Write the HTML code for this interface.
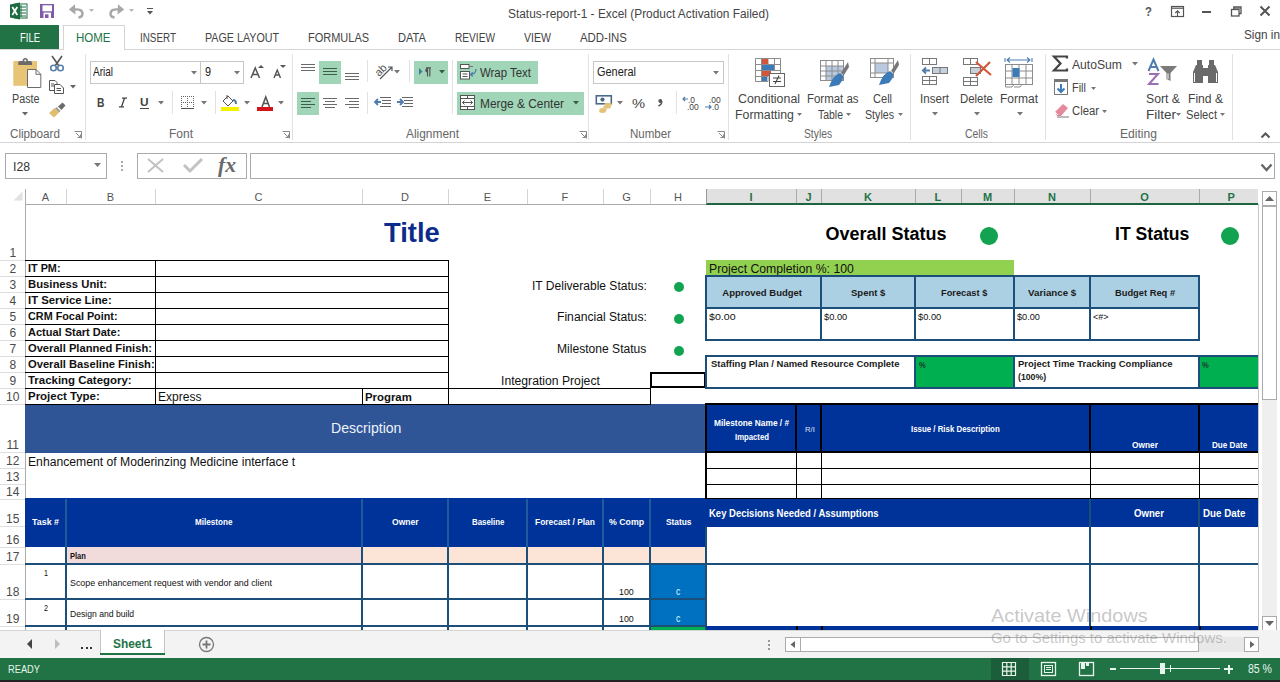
<!DOCTYPE html>
<html><head><meta charset="utf-8"><title>Status-report-1 - Excel</title>
<style>
html,body{margin:0;padding:0;}
body{width:1280px;height:682px;overflow:hidden;position:relative;background:#fff;font-family:"Liberation Sans", sans-serif;}
.t{position:absolute;white-space:nowrap;}
.r{position:absolute;}
.s{position:absolute;overflow:visible;}
</style></head><body>
<svg class="s" style="left:9px;top:2px;" width="19" height="18" viewBox="0 0 19 18"><rect x="6" y="2" width="12" height="14" fill="#fff" stroke="#1d6b40" stroke-width="1"/><path d="M9 5h8M9 8h8M9 11h8M9 14h8M12 3v12" stroke="#1d6b40" stroke-width="1"/><path d="M1 2.5 L11 0.5 L11 17.5 L1 15.5 Z" fill="#1d6b40"/><path d="M3.3 5 L8.3 13 M8.3 5 L3.3 13" stroke="#fff" stroke-width="1.8"/></svg>
<svg class="s" style="left:40px;top:4px;" width="14" height="14" viewBox="0 0 14 14"><rect x="0" y="0" width="14" height="14" fill="#7e5aa8"/><rect x="2.5" y="1.3" width="9.5" height="6" fill="#fff"/><rect x="3.5" y="8.6" width="7.5" height="5.4" fill="#fff"/><rect x="5" y="10.3" width="3.5" height="3.7" fill="#7e5aa8"/></svg>
<svg class="s" style="left:68px;top:3px;" width="17" height="15" viewBox="0 0 17 15"><path d="M0.8 6.5 L7 1.3 L7.5 11.5 Z" fill="#a8a8a8"/><path d="M6 6.5 Q14.5 5.5 14.5 11 Q14.5 14 10.5 14.5" fill="none" stroke="#a8a8a8" stroke-width="2.4"/></svg>
<svg class="s" style="left:88.0px;top:8.0px;" width="7" height="5.0" viewBox="0 0 7 5.0"><path d="M1 1 L6 1 L3.5 4.0 Z" fill="#b8b8b8"/></svg>
<svg class="s" style="left:108px;top:3px;" width="17" height="15" viewBox="0 0 17 15"><path d="M16.2 6.5 L10 1.3 L9.5 11.5 Z" fill="#a8a8a8"/><path d="M11 6.5 Q2.5 5.5 2.5 11 Q2.5 14 6.5 14.5" fill="none" stroke="#a8a8a8" stroke-width="2.4"/></svg>
<svg class="s" style="left:128.0px;top:8.0px;" width="7" height="5.0" viewBox="0 0 7 5.0"><path d="M1 1 L6 1 L3.5 4.0 Z" fill="#b8b8b8"/></svg>
<div class="r" style="left:147px;top:8px;width:6px;height:1.3px;background:#555"></div>
<svg class="s" style="left:146.0px;top:9.75px;" width="8" height="5.5" viewBox="0 0 8 5.5"><path d="M1 1 L7 1 L4.0 4.5 Z" fill="#555"/></svg>
<div class="t" style="left:508.00px;top:7.95px;font-size:12.5px;line-height:12.5px;color:#444;transform:scaleX(0.9513);transform-origin:0 0;">Status-report-1 - Excel (Product Activation Failed)</div>
<div class="t" style="left:1144.70px;top:5.20px;font-size:13px;line-height:13px;color:#555;font-weight:bold;transform:scaleX(0.8750);transform-origin:0 0;">?</div>
<svg class="s" style="left:1170px;top:5px;" width="15" height="13" viewBox="0 0 15 13"><rect x="1.5" y="1.5" width="12" height="10" fill="none" stroke="#555" stroke-width="1.2"/><path d="M1.5 3.2 H13.5" stroke="#555" stroke-width="1.2"/><path d="M7.5 11 V6 M5.3 8 L7.5 5.8 L9.7 8" fill="none" stroke="#555" stroke-width="1.1"/></svg>
<div class="r" style="left:1202px;top:11px;width:9px;height:2px;background:#555"></div>
<svg class="s" style="left:1230px;top:5px;" width="13" height="13" viewBox="0 0 13 13"><rect x="1.5" y="4.5" width="7.5" height="6.5" fill="none" stroke="#555" stroke-width="1.3"/><path d="M3.8 4.5 V1.8 H11 V8.5 H9" fill="none" stroke="#555" stroke-width="1.3"/><path d="M3.8 3 H11" stroke="#555" stroke-width="1.3"/></svg>
<svg class="s" style="left:1259px;top:5px;" width="12" height="12" viewBox="0 0 12 12"><path d="M1.5 1.5 L10.5 10.5 M10.5 1.5 L1.5 10.5" stroke="#555" stroke-width="2"/></svg>
<div class="r" style="left:0px;top:25px;width:59px;height:25px;background:#217346"></div>
<div class="t" style="left:19.50px;top:32.20px;font-size:12px;line-height:12px;color:#fff;transform:scaleX(0.7882);transform-origin:0 0;">FILE</div>
<div class="r" style="left:0px;top:49px;width:1280px;height:1px;background:#d4d4d4"></div>
<div class="r" style="left:63px;top:25px;width:62px;height:25px;background:#fff;border:1px solid #d4d4d4;border-bottom:none;box-sizing:border-box"></div>
<div class="t" style="left:76.00px;top:32.20px;font-size:12px;line-height:12px;color:#217346;transform:scaleX(0.9583);transform-origin:0 0;">HOME</div>
<div class="t" style="left:140.00px;top:32.20px;font-size:12px;line-height:12px;color:#444;transform:scaleX(0.8229);transform-origin:0 0;">INSERT</div>
<div class="t" style="left:205.00px;top:32.20px;font-size:12px;line-height:12px;color:#444;transform:scaleX(0.8929);transform-origin:0 0;">PAGE LAYOUT</div>
<div class="t" style="left:308.00px;top:32.20px;font-size:12px;line-height:12px;color:#444;transform:scaleX(0.9156);transform-origin:0 0;">FORMULAS</div>
<div class="t" style="left:398.00px;top:32.20px;font-size:12px;line-height:12px;color:#444;transform:scaleX(0.9256);transform-origin:0 0;">DATA</div>
<div class="t" style="left:455.00px;top:32.20px;font-size:12px;line-height:12px;color:#444;transform:scaleX(0.8443);transform-origin:0 0;">REVIEW</div>
<div class="t" style="left:524.00px;top:32.20px;font-size:12px;line-height:12px;color:#444;transform:scaleX(0.8780);transform-origin:0 0;">VIEW</div>
<div class="t" style="left:580.00px;top:32.20px;font-size:12px;line-height:12px;color:#444;transform:scaleX(0.9519);transform-origin:0 0;">ADD-INS</div>
<div class="t" style="left:1244.00px;top:29.20px;font-size:12px;line-height:12px;color:#444;transform:scaleX(0.9796);transform-origin:0 0;">Sign in</div>
<div class="r" style="left:0px;top:142px;width:1280px;height:1px;background:#d4d4d4"></div>
<div class="r" style="left:85px;top:54px;width:1px;height:86px;background:#e1e1e1"></div>
<div class="r" style="left:292px;top:54px;width:1px;height:86px;background:#e1e1e1"></div>
<div class="r" style="left:588px;top:54px;width:1px;height:86px;background:#e1e1e1"></div>
<div class="r" style="left:728px;top:54px;width:1px;height:86px;background:#e1e1e1"></div>
<div class="r" style="left:910px;top:54px;width:1px;height:86px;background:#e1e1e1"></div>
<div class="r" style="left:1045px;top:54px;width:1px;height:86px;background:#e1e1e1"></div>
<div class="r" style="left:1232px;top:54px;width:1px;height:86px;background:#e1e1e1"></div>
<div class="t" style="left:10.00px;top:128.20px;font-size:12px;line-height:12px;color:#666;transform:scaleX(0.9732);transform-origin:0 0;">Clipboard</div>
<div class="t" style="left:169.00px;top:128.20px;font-size:12px;line-height:12px;color:#666;">Font</div>
<div class="t" style="left:406.00px;top:128.20px;font-size:12px;line-height:12px;color:#666;transform:scaleX(0.9930);transform-origin:0 0;">Alignment</div>
<div class="t" style="left:630.00px;top:128.20px;font-size:12px;line-height:12px;color:#666;transform:scaleX(0.9619);transform-origin:0 0;">Number</div>
<div class="t" style="left:804.00px;top:128.20px;font-size:12px;line-height:12px;color:#666;transform:scaleX(0.8582);transform-origin:0 0;">Styles</div>
<div class="t" style="left:965.00px;top:128.20px;font-size:12px;line-height:12px;color:#666;transform:scaleX(0.8638);transform-origin:0 0;">Cells</div>
<div class="t" style="left:1120.00px;top:128.20px;font-size:12px;line-height:12px;color:#666;transform:scaleX(1.0068);transform-origin:0 0;">Editing</div>
<svg class="s" style="left:74px;top:131px;" width="8" height="8" viewBox="0 0 8 8"><path d="M0.5 0.5 H7.5 V7.5" fill="none" stroke="#888"/><path d="M2 2 L6.5 6.5 M3.5 6.5 H6.5 V3.5" fill="none" stroke="#888"/></svg>
<svg class="s" style="left:282px;top:131px;" width="8" height="8" viewBox="0 0 8 8"><path d="M0.5 0.5 H7.5 V7.5" fill="none" stroke="#888"/><path d="M2 2 L6.5 6.5 M3.5 6.5 H6.5 V3.5" fill="none" stroke="#888"/></svg>
<svg class="s" style="left:579px;top:131px;" width="8" height="8" viewBox="0 0 8 8"><path d="M0.5 0.5 H7.5 V7.5" fill="none" stroke="#888"/><path d="M2 2 L6.5 6.5 M3.5 6.5 H6.5 V3.5" fill="none" stroke="#888"/></svg>
<svg class="s" style="left:717px;top:131px;" width="8" height="8" viewBox="0 0 8 8"><path d="M0.5 0.5 H7.5 V7.5" fill="none" stroke="#888"/><path d="M2 2 L6.5 6.5 M3.5 6.5 H6.5 V3.5" fill="none" stroke="#888"/></svg>
<svg class="s" style="left:12px;top:56px;" width="31" height="33" viewBox="0 0 31 33"><rect x="1.3" y="5" width="23.7" height="24.8" fill="#e8c576"/><path d="M6.2 9 V6.5 Q6.2 5 8 5 H18.5 Q20 5 20 6.5 V9 Z" fill="#6b6b6b"/><circle cx="13.3" cy="4.5" r="2.6" fill="#6b6b6b"/><circle cx="13.3" cy="4.5" r="1" fill="#fff"/><path d="M15.5 13.5 H24 L28.8 18.3 V31.5 H15.5 Z" fill="#fff" stroke="#6b6b6b" stroke-width="1"/><path d="M24 13.5 V18.3 H28.8" fill="none" stroke="#6b6b6b" stroke-width="1"/></svg>
<div class="t" style="left:11.50px;top:93.20px;font-size:12px;line-height:12px;color:#444;transform:scaleX(0.8980);transform-origin:0 0;">Paste</div>
<svg class="s" style="left:20.5px;top:111.25px;" width="8" height="5.5" viewBox="0 0 8 5.5"><path d="M1 1 L7 1 L4.0 4.5 Z" fill="#666"/></svg>
<svg class="s" style="left:49px;top:55px;" width="16" height="17" viewBox="0 0 16 17"><path d="M3 1 L10 11 M13 1 L6 11" stroke="#555" stroke-width="1.6"/><circle cx="4.5" cy="13" r="2.8" fill="none" stroke="#5a7fa8" stroke-width="1.6"/><circle cx="11.5" cy="13" r="2.8" fill="none" stroke="#5a7fa8" stroke-width="1.6"/></svg>
<svg class="s" style="left:48px;top:79px;" width="18" height="16" viewBox="0 0 18 16"><path d="M1.5 1.5 H7 L9 3.5 V11.5 H1.5 Z" fill="#fff" stroke="#555"/><path d="M6.5 5.5 H12 L15.5 9 V14.5 H6.5 Z" fill="#fff" stroke="#555"/><path d="M3 5 H6 M3 7 H6 M8.5 9.5 H13 M8.5 11.5 H13" stroke="#555"/></svg>
<svg class="s" style="left:69.0px;top:84.25px;" width="8" height="5.5" viewBox="0 0 8 5.5"><path d="M1 1 L7 1 L4.0 4.5 Z" fill="#666"/></svg>
<svg class="s" style="left:48px;top:101px;" width="19" height="17" viewBox="0 0 19 17"><path d="M10 5.5 L14.5 1.5 L17.5 4.5 L13.5 9 Z" fill="#6b6b6b"/><path d="M8.5 6 L12.5 10 L11 11.5 L7 7.5 Z" fill="#9a9a9a"/><path d="M1 12 L6.5 7 L11 11.5 L6 16.5 Z" fill="#e0bd6e"/></svg>
<div class="r" style="left:90px;top:61px;width:154px;height:23px;border:1px solid #c6c6c6;box-sizing:border-box;background:#fff"></div>
<div class="r" style="left:200px;top:62px;width:1px;height:21px;background:#c6c6c6"></div>
<div class="t" style="left:93.00px;top:66.20px;font-size:12px;line-height:12px;color:#222;transform:scaleX(0.8333);transform-origin:0 0;">Arial</div>
<div class="t" style="left:205.00px;top:66.20px;font-size:12px;line-height:12px;color:#222;transform:scaleX(0.9057);transform-origin:0 0;">9</div>
<svg class="s" style="left:189.5px;top:69.75px;" width="8" height="5.5" viewBox="0 0 8 5.5"><path d="M1 1 L7 1 L4.0 4.5 Z" fill="#777"/></svg>
<svg class="s" style="left:232.5px;top:69.75px;" width="8" height="5.5" viewBox="0 0 8 5.5"><path d="M1 1 L7 1 L4.0 4.5 Z" fill="#777"/></svg>
<svg class="s" style="left:250px;top:67px;" width="11" height="12" viewBox="0 0 11 12"><path d="M1 11 L5.25 1 L9.5 11 M2.8 7.5 H7.7" fill="none" stroke="#555" stroke-width="1.5"/></svg>
<svg class="s" style="left:257.5px;top:64.5px;" width="6" height="4" viewBox="0 0 6 4"><path d="M0 3 L3 0 L6 3 Z" fill="#555"/></svg>
<svg class="s" style="left:273px;top:69px;" width="9" height="10" viewBox="0 0 9 10"><path d="M1 9 L4.25 1 L7.5 9 M2.3 6 H6.2" fill="none" stroke="#555" stroke-width="1.4"/></svg>
<svg class="s" style="left:279.5px;top:64.5px;" width="6" height="4" viewBox="0 0 6 4"><path d="M0 0 L3 3 L6 0 Z" fill="#555"/></svg>
<div class="t" style="left:96.60px;top:97.20px;font-size:12px;line-height:12px;color:#444;font-weight:bold;transform:scaleX(0.8580);transform-origin:0 0;">B</div>
<svg class="s" style="left:118px;top:97px;" width="10" height="11" viewBox="0 0 10 11"><path d="M4 1.2 H9 M1 9.8 H6 M6.5 1.2 L3.5 9.8" fill="none" stroke="#444" stroke-width="1.3"/></svg>
<div class="t" style="left:140.30px;top:96.70px;font-size:11px;line-height:11px;color:#444;font-weight:bold;transform:scaleX(1.0750);transform-origin:0 0;">U</div>
<div class="r" style="left:140px;top:108px;width:9px;height:1px;background:#444"></div>
<svg class="s" style="left:157.0px;top:100.25px;" width="8" height="5.5" viewBox="0 0 8 5.5"><path d="M1 1 L7 1 L4.0 4.5 Z" fill="#777"/></svg>
<div class="r" style="left:172px;top:91px;width:1px;height:23px;background:#e1e1e1"></div>
<svg class="s" style="left:181px;top:96px;" width="13" height="13" viewBox="0 0 13 13"><rect x="0" y="0" width="1" height="1" fill="#666"/><rect x="0" y="6" width="1" height="1" fill="#666"/><rect x="0" y="0" width="1" height="1" fill="#666"/><rect x="6" y="0" width="1" height="1" fill="#666"/><rect x="12" y="0" width="1" height="1" fill="#666"/><rect x="2" y="0" width="1" height="1" fill="#666"/><rect x="2" y="6" width="1" height="1" fill="#666"/><rect x="0" y="2" width="1" height="1" fill="#666"/><rect x="6" y="2" width="1" height="1" fill="#666"/><rect x="12" y="2" width="1" height="1" fill="#666"/><rect x="4" y="0" width="1" height="1" fill="#666"/><rect x="4" y="6" width="1" height="1" fill="#666"/><rect x="0" y="4" width="1" height="1" fill="#666"/><rect x="6" y="4" width="1" height="1" fill="#666"/><rect x="12" y="4" width="1" height="1" fill="#666"/><rect x="6" y="0" width="1" height="1" fill="#666"/><rect x="6" y="6" width="1" height="1" fill="#666"/><rect x="0" y="6" width="1" height="1" fill="#666"/><rect x="6" y="6" width="1" height="1" fill="#666"/><rect x="12" y="6" width="1" height="1" fill="#666"/><rect x="8" y="0" width="1" height="1" fill="#666"/><rect x="8" y="6" width="1" height="1" fill="#666"/><rect x="0" y="8" width="1" height="1" fill="#666"/><rect x="6" y="8" width="1" height="1" fill="#666"/><rect x="12" y="8" width="1" height="1" fill="#666"/><rect x="10" y="0" width="1" height="1" fill="#666"/><rect x="10" y="6" width="1" height="1" fill="#666"/><rect x="0" y="10" width="1" height="1" fill="#666"/><rect x="6" y="10" width="1" height="1" fill="#666"/><rect x="12" y="10" width="1" height="1" fill="#666"/><rect x="12" y="0" width="1" height="1" fill="#666"/><rect x="12" y="6" width="1" height="1" fill="#666"/><rect x="0" y="12" width="1" height="1" fill="#666"/><rect x="6" y="12" width="1" height="1" fill="#666"/><rect x="12" y="12" width="1" height="1" fill="#666"/><rect x="0" y="12" width="13" height="1" fill="#555"/></svg>
<svg class="s" style="left:200.0px;top:100.25px;" width="8" height="5.5" viewBox="0 0 8 5.5"><path d="M1 1 L7 1 L4.0 4.5 Z" fill="#777"/></svg>
<div class="r" style="left:215px;top:91px;width:1px;height:23px;background:#e1e1e1"></div>
<svg class="s" style="left:220px;top:94px;" width="21" height="18" viewBox="0 0 21 18"><path d="M3 7 L8 2 L13 7 L8 12 Z" fill="#fff" stroke="#555"/><path d="M7 1 V5" stroke="#555"/><path d="M13 6 Q16 6 16 10" fill="none" stroke="#4f7cae" stroke-width="2"/><rect x="1" y="13" width="18" height="4" fill="#f3f100"/></svg>
<svg class="s" style="left:243.0px;top:100.25px;" width="8" height="5.5" viewBox="0 0 8 5.5"><path d="M1 1 L7 1 L4.0 4.5 Z" fill="#777"/></svg>
<svg class="s" style="left:261px;top:96px;" width="10" height="12" viewBox="0 0 10 12"><path d="M1 11 L4.75 1 L8.5 11 M2.5 7.5 H7" fill="none" stroke="#555" stroke-width="1.6"/></svg>
<div class="r" style="left:257px;top:107px;width:16px;height:4px;background:#d3141b"></div>
<svg class="s" style="left:277.0px;top:100.25px;" width="8" height="5.5" viewBox="0 0 8 5.5"><path d="M1 1 L7 1 L4.0 4.5 Z" fill="#777"/></svg>
<div class="r" style="left:301px;top:64px;width:14px;height:1px;background:#6a6a6a"></div>
<div class="r" style="left:301px;top:67px;width:14px;height:1px;background:#6a6a6a"></div>
<div class="r" style="left:301px;top:70px;width:14px;height:1px;background:#6a6a6a"></div>
<div class="r" style="left:319px;top:61px;width:22px;height:23px;background:#a0d5b8"></div>
<div class="r" style="left:323px;top:68px;width:14px;height:1px;background:#3d5c4a"></div>
<div class="r" style="left:323px;top:71px;width:14px;height:1px;background:#3d5c4a"></div>
<div class="r" style="left:323px;top:74px;width:14px;height:1px;background:#3d5c4a"></div>
<div class="r" style="left:345px;top:73px;width:14px;height:1px;background:#6a6a6a"></div>
<div class="r" style="left:345px;top:76px;width:14px;height:1px;background:#6a6a6a"></div>
<div class="r" style="left:345px;top:79px;width:14px;height:1px;background:#6a6a6a"></div>
<div class="r" style="left:367px;top:60px;width:1px;height:22px;background:#e1e1e1"></div>
<svg class="s" style="left:374px;top:63px;" width="22" height="18" viewBox="0 0 22 18"><text x="0" y="0" font-family="Liberation Sans" font-size="11" fill="#555" transform="translate(5,14) rotate(-45)">ab</text><path d="M6 16 L18 4 M14 4 H18 V8" fill="none" stroke="#555" stroke-width="1.2"/></svg>
<svg class="s" style="left:393.0px;top:69.25px;" width="8" height="5.5" viewBox="0 0 8 5.5"><path d="M1 1 L7 1 L4.0 4.5 Z" fill="#777"/></svg>
<div class="r" style="left:409px;top:60px;width:1px;height:22px;background:#e1e1e1"></div>
<div class="r" style="left:414px;top:61px;width:34px;height:23px;background:#a0d5b8"></div>
<svg class="s" style="left:418px;top:67px;" width="14" height="10" viewBox="0 0 14 10"><path d="M1 1 L4.5 4.5 L1 8 Z" fill="#3d7a9e"/><path d="M8 0.8 H13 M9.5 0.8 V9.5 M11.8 0.8 V9.5" stroke="#555" stroke-width="1.2"/><path d="M9.5 1 A2.2 2.2 0 0 0 9.5 5.4 Z" fill="#555"/></svg>
<svg class="s" style="left:438.0px;top:69.25px;" width="8" height="5.5" viewBox="0 0 8 5.5"><path d="M1 1 L7 1 L4.0 4.5 Z" fill="#3a5a48"/></svg>
<div class="r" style="left:457px;top:61px;width:81px;height:23px;background:#a0d5b8"></div>
<svg class="s" style="left:460px;top:63px;" width="18" height="17" viewBox="0 0 18 17"><rect x="0.5" y="1.5" width="8.5" height="4" fill="#fff" stroke="#555"/><path d="M9 3.5 H13" stroke="#777"/><rect x="0.5" y="8.5" width="9" height="7.5" fill="#fff" stroke="#555"/><path d="M2.5 11 H7.5 M2.5 13.5 H7.5" stroke="#555"/><path d="M16 6 Q16 11 11 11.5 M12.8 9.3 L10.5 11.5 L12.8 13.5" fill="none" stroke="#4f7cae" stroke-width="1.3"/></svg>
<div class="t" style="left:480.00px;top:67.20px;font-size:12px;line-height:12px;color:#333;transform:scaleX(0.9510);transform-origin:0 0;">Wrap Text</div>
<div class="r" style="left:297px;top:92px;width:22px;height:23px;background:#a0d5b8"></div>
<div class="r" style="left:301px;top:98px;width:14px;height:1px;background:#3d5c4a"></div>
<div class="r" style="left:323px;top:98px;width:14px;height:1px;background:#6a6a6a"></div>
<div class="r" style="left:345px;top:98px;width:14px;height:1px;background:#6a6a6a"></div>
<div class="r" style="left:301px;top:101px;width:10px;height:1px;background:#3d5c4a"></div>
<div class="r" style="left:325px;top:101px;width:10px;height:1px;background:#6a6a6a"></div>
<div class="r" style="left:349px;top:101px;width:10px;height:1px;background:#6a6a6a"></div>
<div class="r" style="left:301px;top:104px;width:14px;height:1px;background:#3d5c4a"></div>
<div class="r" style="left:323px;top:104px;width:14px;height:1px;background:#6a6a6a"></div>
<div class="r" style="left:345px;top:104px;width:14px;height:1px;background:#6a6a6a"></div>
<div class="r" style="left:301px;top:107px;width:10px;height:1px;background:#3d5c4a"></div>
<div class="r" style="left:325px;top:107px;width:10px;height:1px;background:#6a6a6a"></div>
<div class="r" style="left:349px;top:107px;width:10px;height:1px;background:#6a6a6a"></div>
<div class="r" style="left:367px;top:92px;width:1px;height:22px;background:#e1e1e1"></div>
<svg class="s" style="left:374px;top:96px;" width="18" height="13" viewBox="0 0 18 13"><path d="M6 1.5 H17 M8 4.5 H17 M8 7.5 H17 M6 10.5 H17" stroke="#666" stroke-width="1.2"/><path d="M1 6 H7 M4 3 L1 6 L4 9" fill="none" stroke="#4f7cae" stroke-width="1.8"/></svg>
<svg class="s" style="left:396px;top:96px;" width="18" height="13" viewBox="0 0 18 13"><path d="M6 1.5 H17 M8 4.5 H17 M8 7.5 H17 M6 10.5 H17" stroke="#666" stroke-width="1.2"/><path d="M1 6 H7 M4 3 L7 6 L4 9" fill="none" stroke="#4f7cae" stroke-width="1.8"/></svg>
<div class="r" style="left:452px;top:60px;width:1px;height:54px;background:#e1e1e1"></div>
<div class="r" style="left:457px;top:92px;width:127px;height:23px;background:#a0d5b8"></div>
<svg class="s" style="left:460px;top:95px;" width="16" height="16" viewBox="0 0 16 16"><rect x="0.5" y="0.5" width="14" height="14" fill="#fff" stroke="#555"/><path d="M0.5 3.5 H14.5 M0.5 11.5 H14.5 M7.5 0.5 V3.5 M7.5 11.5 V14.5" fill="none" stroke="#555"/><path d="M2.5 7.5 H12.5 M4.5 5.5 L2.5 7.5 L4.5 9.5 M10.5 5.5 L12.5 7.5 L10.5 9.5" fill="none" stroke="#555"/></svg>
<div class="t" style="left:480.00px;top:98.20px;font-size:12px;line-height:12px;color:#333;transform:scaleX(0.9912);transform-origin:0 0;">Merge &amp; Center</div>
<svg class="s" style="left:572.0px;top:100.25px;" width="8" height="5.5" viewBox="0 0 8 5.5"><path d="M1 1 L7 1 L4.0 4.5 Z" fill="#3a5a48"/></svg>
<div class="r" style="left:593px;top:61px;width:131px;height:23px;border:1px solid #c6c6c6;box-sizing:border-box;background:#fff"></div>
<div class="t" style="left:597.00px;top:66.20px;font-size:12px;line-height:12px;color:#222;transform:scaleX(0.9123);transform-origin:0 0;">General</div>
<svg class="s" style="left:712.0px;top:69.75px;" width="8" height="5.5" viewBox="0 0 8 5.5"><path d="M1 1 L7 1 L4.0 4.5 Z" fill="#777"/></svg>
<svg class="s" style="left:595px;top:94px;" width="19" height="19" viewBox="0 0 19 19"><rect x="1.3" y="1.8" width="15" height="8" fill="#fff" stroke="#4a6a8a" stroke-width="1.6"/><circle cx="7.5" cy="5.6" r="2.1" fill="#4a6a8a"/><ellipse cx="13" cy="10.5" rx="4" ry="1.7" fill="#e3c27a"/><ellipse cx="12" cy="13" rx="4" ry="1.6" fill="#e3c27a"/><ellipse cx="8" cy="15.5" rx="3.8" ry="1.6" fill="#e3c27a"/><ellipse cx="7.5" cy="17.6" rx="3.5" ry="1.3" fill="#e3c27a"/></svg>
<svg class="s" style="left:616.0px;top:100.25px;" width="8" height="5.5" viewBox="0 0 8 5.5"><path d="M1 1 L7 1 L4.0 4.5 Z" fill="#777"/></svg>
<div class="t" style="left:632.00px;top:97.20px;font-size:13px;line-height:13px;color:#444;transform:scaleX(1.1304);transform-origin:0 0;">%</div>
<svg class="s" style="left:656px;top:98px;" width="8" height="9" viewBox="0 0 8 9"><circle cx="4.3" cy="3" r="1.9" fill="#555"/><path d="M5.9 3.3 Q5.9 6.6 2.4 8" fill="none" stroke="#555" stroke-width="1.4"/></svg>
<div class="r" style="left:676px;top:91px;width:1px;height:23px;background:#e1e1e1"></div>
<svg class="s" style="left:682px;top:95px;" width="17" height="16" viewBox="0 0 17 16"><text x="6" y="7.5" font-family="Liberation Sans" font-size="8.5" fill="#444">.0</text><text x="5" y="15" font-family="Liberation Sans" font-size="8.5" fill="#444">.00</text><path d="M1 4 H6 M3 2 L1 4 L3 6" fill="none" stroke="#4f7cae" stroke-width="1.2"/></svg>
<svg class="s" style="left:704px;top:95px;" width="17" height="16" viewBox="0 0 17 16"><text x="5" y="7.5" font-family="Liberation Sans" font-size="8.5" fill="#444">.00</text><text x="8" y="15" font-family="Liberation Sans" font-size="8.5" fill="#444">.0</text><path d="M1 12 H7 M5 10 L7 12 L5 14" fill="none" stroke="#4f7cae" stroke-width="1.2"/></svg>
<svg class="s" style="left:754px;top:57px;" width="32" height="31" viewBox="0 0 32 31"><path d="M1.5 1.5 H26.5 V24 M1.5 1.5 V24.5 H14 M1.5 7.5 H26.5 M1.5 13.5 H26.5 M1.5 19.5 H14 M7.5 1.5 V24.5 M14 1.5 V24.5 M20.5 1.5 V13.5" fill="none" stroke="#8c8c8c"/><rect x="8" y="2" width="6" height="5" fill="#d2573a"/><rect x="8" y="8" width="12" height="5" fill="#3d7ab8"/><rect x="8" y="14" width="9" height="5" fill="#d2573a"/><rect x="8" y="20" width="5" height="4" fill="#3d7ab8"/><rect x="15.5" y="16.5" width="15" height="13" fill="#fff" stroke="#666"/><path d="M19 21 H27 M19 24.5 H27 M25 18.5 L21 27" stroke="#444" stroke-width="1.1"/></svg>
<div class="t" style="left:738.00px;top:93.20px;font-size:12px;line-height:12px;color:#444;transform:scaleX(1.0333);transform-origin:0 0;">Conditional</div>
<div class="t" style="left:735.00px;top:109.20px;font-size:12px;line-height:12px;color:#444;transform:scaleX(1.0283);transform-origin:0 0;">Formatting</div>
<svg class="s" style="left:796.0px;top:111.5px;" width="7" height="5.0" viewBox="0 0 7 5.0"><path d="M1 1 L6 1 L3.5 4.0 Z" fill="#777"/></svg>
<svg class="s" style="left:819px;top:59px;" width="31" height="29" viewBox="0 0 31 29"><rect x="1.5" y="1.5" width="23" height="20" fill="#fff" stroke="#8c8c8c"/><rect x="7" y="7" width="17" height="14" fill="#b9c9e0"/><path d="M1.5 7 H24.5 M1.5 12 H24.5 M1.5 17 H24.5 M7 1.5 V21.5 M13 1.5 V21.5 M19 1.5 V21.5" stroke="#8c8c8c"/><path d="M29 3 L22 14 L25 16 L30 8 Z" fill="#777"/><path d="M21 14 Q14 16 10 28 L20 26 Q25 20 24 17 Z" fill="#3d7ab8"/></svg>
<div class="t" style="left:807.00px;top:93.20px;font-size:12px;line-height:12px;color:#444;transform:scaleX(0.9537);transform-origin:0 0;">Format as</div>
<div class="t" style="left:818.00px;top:109.20px;font-size:12px;line-height:12px;color:#444;transform:scaleX(0.8696);transform-origin:0 0;">Table</div>
<svg class="s" style="left:845.0px;top:111.5px;" width="7" height="5.0" viewBox="0 0 7 5.0"><path d="M1 1 L6 1 L3.5 4.0 Z" fill="#777"/></svg>
<svg class="s" style="left:869px;top:57px;" width="31" height="30" viewBox="0 0 31 30"><rect x="1.5" y="1.5" width="23" height="19" fill="#fff" stroke="#8c8c8c"/><rect x="6" y="6" width="13" height="10" fill="#b9c9e0"/><path d="M1.5 6 H24.5 M1.5 16 H24.5 M6 1.5 V20.5 M19 1.5 V20.5" stroke="#8c8c8c"/><path d="M29 3 L22 14 L25 16 L30 8 Z" fill="#777"/><path d="M21 14 Q14 16 10 28 L20 26 Q25 20 24 17 Z" fill="#3d7ab8"/></svg>
<div class="t" style="left:873.00px;top:93.20px;font-size:12px;line-height:12px;color:#444;transform:scaleX(0.9212);transform-origin:0 0;">Cell</div>
<div class="t" style="left:864.50px;top:109.20px;font-size:12px;line-height:12px;color:#444;transform:scaleX(0.8889);transform-origin:0 0;">Styles</div>
<svg class="s" style="left:896.5px;top:111.5px;" width="7" height="5.0" viewBox="0 0 7 5.0"><path d="M1 1 L6 1 L3.5 4.0 Z" fill="#777"/></svg>
<svg class="s" style="left:921px;top:57px;" width="28" height="29" viewBox="0 0 28 29"><rect x="1.5" y="1.5" width="14" height="6" fill="#fff" stroke="#777"/><path d="M8.5 1.5 V7.5" stroke="#777"/><rect x="11.5" y="10.5" width="15" height="6" fill="#c5d0dc" stroke="#777"/><path d="M19 10.5 V16.5" stroke="#777"/><path d="M2 13.5 H9 M5 10.5 L2 13.5 L5 16.5" fill="none" stroke="#4f7cae" stroke-width="2"/><rect x="1.5" y="19.5" width="14" height="8" fill="#fff" stroke="#777"/><path d="M8.5 19.5 V27.5 M1.5 23.5 H15.5" stroke="#777"/></svg>
<div class="t" style="left:920.00px;top:93.20px;font-size:12px;line-height:12px;color:#444;transform:scaleX(0.9667);transform-origin:0 0;">Insert</div>
<svg class="s" style="left:930.5px;top:111.25px;" width="8" height="5.5" viewBox="0 0 8 5.5"><path d="M1 1 L7 1 L4.0 4.5 Z" fill="#777"/></svg>
<svg class="s" style="left:962px;top:57px;" width="31" height="30" viewBox="0 0 31 30"><rect x="1.5" y="1.5" width="14" height="6" fill="#fff" stroke="#777"/><path d="M8.5 1.5 V7.5" stroke="#777"/><rect x="8.5" y="10.5" width="10" height="6" fill="#c5d0dc" stroke="#777"/><rect x="1.5" y="20.5" width="14" height="8" fill="#fff" stroke="#777"/><path d="M8.5 20.5 V28.5 M1.5 24.5 H15.5" stroke="#777"/><path d="M14 5 L29 18 M28 5 L14 19" stroke="#d2573a" stroke-width="2.2"/></svg>
<div class="t" style="left:960.00px;top:93.20px;font-size:12px;line-height:12px;color:#444;transform:scaleX(0.9496);transform-origin:0 0;">Delete</div>
<svg class="s" style="left:972.5px;top:111.25px;" width="8" height="5.5" viewBox="0 0 8 5.5"><path d="M1 1 L7 1 L4.0 4.5 Z" fill="#777"/></svg>
<svg class="s" style="left:1004px;top:56px;" width="30" height="32" viewBox="0 0 30 32"><path d="M1 2 V6 M28 2 V6 M3 4 H26 M6 1.5 L3 4 L6 6.5 M23 1.5 L26 4 L23 6.5" fill="none" stroke="#4f7cae" stroke-width="1.1"/><rect x="1.5" y="8.5" width="27" height="20" fill="#fff" stroke="#8c8c8c"/><path d="M1.5 15 H28.5 M1.5 22 H28.5 M8 8.5 V28.5 M15 8.5 V28.5 M22 8.5 V28.5" stroke="#8c8c8c"/><rect x="8.5" y="12" width="7" height="9" fill="#3d7ab8"/><path d="M1.5 28.5 V31 H8 L10 28.5 M10 31 H16 L18 28.5" fill="none" stroke="#8c8c8c"/></svg>
<div class="t" style="left:1000.00px;top:93.20px;font-size:12px;line-height:12px;color:#444;">Format</div>
<svg class="s" style="left:1015.5px;top:111.25px;" width="8" height="5.5" viewBox="0 0 8 5.5"><path d="M1 1 L7 1 L4.0 4.5 Z" fill="#777"/></svg>
<svg class="s" style="left:1052px;top:55px;" width="17" height="17" viewBox="0 0 17 17"><path d="M15 3.5 V1.5 H2 L8.5 8.5 L2 15.5 H15 V13.5" fill="none" stroke="#444" stroke-width="2.2" stroke-linejoin="miter"/></svg>
<div class="t" style="left:1072.00px;top:59.20px;font-size:12px;line-height:12px;color:#444;transform:scaleX(1.0127);transform-origin:0 0;">AutoSum</div>
<svg class="s" style="left:1130.5px;top:61.25px;" width="8" height="5.5" viewBox="0 0 8 5.5"><path d="M1 1 L7 1 L4.0 4.5 Z" fill="#777"/></svg>
<svg class="s" style="left:1053px;top:78px;" width="16" height="18" viewBox="0 0 16 18"><rect x="1.5" y="1.5" width="13" height="15" fill="#fff" stroke="#777"/><rect x="1" y="1" width="14" height="3" fill="#777"/><path d="M8 6 V14 M4.5 10.5 L8 14 L11.5 10.5" fill="none" stroke="#3d7ab8" stroke-width="2"/></svg>
<div class="t" style="left:1072.00px;top:82.20px;font-size:12px;line-height:12px;color:#444;transform:scaleX(0.9106);transform-origin:0 0;">Fill</div>
<svg class="s" style="left:1090.0px;top:85.5px;" width="7" height="5.0" viewBox="0 0 7 5.0"><path d="M1 1 L6 1 L3.5 4.0 Z" fill="#777"/></svg>
<svg class="s" style="left:1054px;top:103px;" width="16" height="15" viewBox="0 0 16 15"><path d="M1 9 L9 1 L14 5 L7 13 L3 13 Z" fill="#e58a9c"/><path d="M1 9 L4 12" stroke="#fff"/><path d="M3 14 H15" stroke="#777"/></svg>
<div class="t" style="left:1072.00px;top:105.20px;font-size:12px;line-height:12px;color:#444;transform:scaleX(0.9432);transform-origin:0 0;">Clear</div>
<svg class="s" style="left:1101.0px;top:108.5px;" width="7" height="5.0" viewBox="0 0 7 5.0"><path d="M1 1 L6 1 L3.5 4.0 Z" fill="#777"/></svg>
<svg class="s" style="left:1147px;top:58px;" width="13" height="28" viewBox="0 0 13 28"><path d="M1.5 13 L6.5 1.5 L11.5 13 M3.3 9 H9.7" fill="none" stroke="#4f7cae" stroke-width="2"/><path d="M2 16 H11 L2 26 H11.5" fill="none" stroke="#9c6fb0" stroke-width="2"/></svg>
<svg class="s" style="left:1159px;top:65px;" width="19" height="17" viewBox="0 0 19 17"><path d="M1 1 H18 L11.5 8 V16 L7.5 14 V8 Z" fill="#7a7a7a"/><path d="M9 8.5 V14" stroke="#fff" stroke-width="1"/></svg>
<div class="t" style="left:1146.00px;top:93.20px;font-size:12px;line-height:12px;color:#444;transform:scaleX(1.0187);transform-origin:0 0;">Sort &amp;</div>
<div class="t" style="left:1146.00px;top:109.20px;font-size:12px;line-height:12px;color:#444;transform:scaleX(1.1268);transform-origin:0 0;">Filter</div>
<svg class="s" style="left:1175.0px;top:111.5px;" width="7" height="5.0" viewBox="0 0 7 5.0"><path d="M1 1 L6 1 L3.5 4.0 Z" fill="#777"/></svg>
<svg class="s" style="left:1192px;top:59px;" width="28" height="25" viewBox="0 0 28 25"><rect x="5" y="1" width="5" height="6" fill="#6a6a6a"/><rect x="17" y="1" width="5" height="6" fill="#6a6a6a"/><path d="M4 6 H11 V24 H1 V13 Z" fill="#6a6a6a"/><path d="M16 6 H23 L26 13 V24 H16 Z" fill="#6a6a6a"/><rect x="10" y="9" width="7" height="8" fill="#6a6a6a"/><path d="M2.5 14 V23 M24.5 14 V23" stroke="#fff" stroke-width="1"/></svg>
<div class="t" style="left:1188.00px;top:93.20px;font-size:12px;line-height:12px;color:#444;transform:scaleX(1.0108);transform-origin:0 0;">Find &amp;</div>
<div class="t" style="left:1186.00px;top:109.20px;font-size:12px;line-height:12px;color:#444;transform:scaleX(0.9288);transform-origin:0 0;">Select</div>
<svg class="s" style="left:1219.0px;top:111.5px;" width="7" height="5.0" viewBox="0 0 7 5.0"><path d="M1 1 L6 1 L3.5 4.0 Z" fill="#777"/></svg>
<svg class="s" style="left:1260px;top:131px;" width="11" height="8" viewBox="0 0 11 8"><path d="M1.5 6.5 L5.5 2.5 L9.5 6.5" fill="none" stroke="#555" stroke-width="2"/></svg>
<div class="r" style="left:5px;top:153px;width:102px;height:26px;border:1px solid #ababab;box-sizing:border-box;background:#fff"></div>
<div class="t" style="left:13.00px;top:161.20px;font-size:12px;line-height:12px;color:#333;transform:scaleX(1.0226);transform-origin:0 0;">I28</div>
<svg class="s" style="left:93.0px;top:162.0px;" width="9" height="6.0" viewBox="0 0 9 6.0"><path d="M1 1 L8 1 L4.5 5.0 Z" fill="#777"/></svg>
<div class="r" style="left:121px;top:161px;width:2px;height:2px;background:#aaa"></div>
<div class="r" style="left:121px;top:165px;width:2px;height:2px;background:#aaa"></div>
<div class="r" style="left:121px;top:169px;width:2px;height:2px;background:#aaa"></div>
<div class="r" style="left:137px;top:153px;width:110px;height:26px;border:1px solid #ababab;box-sizing:border-box;background:#fff"></div>
<svg class="s" style="left:146px;top:157px;" width="19" height="17" viewBox="0 0 19 17"><path d="M2 2 L17 15 M17 2 L2 15" stroke="#c2c2c2" stroke-width="2"/></svg>
<svg class="s" style="left:182px;top:157px;" width="22" height="17" viewBox="0 0 22 17"><path d="M2 8 L8 14 L20 2" fill="none" stroke="#c2c2c2" stroke-width="3"/></svg>
<div class="t" style="left:218.00px;top:155.20px;font-size:20px;line-height:20px;color:#6a6a6a;font-weight:bold;font-style:italic;font-family:'Liberation Serif', serif;transform:scaleX(1.0827);transform-origin:0 0;">fx</div>
<div class="r" style="left:250px;top:153px;width:1025px;height:26px;border:1px solid #ababab;box-sizing:border-box;background:#fff"></div>
<svg class="s" style="left:1260px;top:163px;" width="13" height="10" viewBox="0 0 13 10"><path d="M1.5 1.5 L6.5 7 L11.5 1.5" fill="none" stroke="#666" stroke-width="2.4"/></svg>
<div class="r" style="left:0px;top:189px;width:1258px;height:441px;background:#fff"></div>
<div class="r" style="left:706px;top:189px;width:90px;height:14px;background:#e1e1e1"></div>
<div class="r" style="left:796px;top:189px;width:25px;height:14px;background:#e1e1e1"></div>
<div class="r" style="left:821px;top:189px;width:94px;height:14px;background:#e1e1e1"></div>
<div class="r" style="left:915px;top:189px;width:46px;height:14px;background:#e1e1e1"></div>
<div class="r" style="left:961px;top:189px;width:53px;height:14px;background:#e1e1e1"></div>
<div class="r" style="left:1014px;top:189px;width:76px;height:14px;background:#e1e1e1"></div>
<div class="r" style="left:1090px;top:189px;width:109px;height:14px;background:#e1e1e1"></div>
<div class="r" style="left:1199px;top:189px;width:59px;height:14px;background:#e1e1e1"></div>
<div class="r" style="left:66px;top:189px;width:1px;height:15px;background:#d4d4d4"></div>
<div class="t" style="left:41.81px;top:191.70px;font-size:11px;line-height:11px;color:#555;">A</div>
<div class="r" style="left:155px;top:189px;width:1px;height:15px;background:#d4d4d4"></div>
<div class="t" style="left:106.81px;top:191.70px;font-size:11px;line-height:11px;color:#555;">B</div>
<div class="r" style="left:362px;top:189px;width:1px;height:15px;background:#d4d4d4"></div>
<div class="t" style="left:254.50px;top:191.70px;font-size:11px;line-height:11px;color:#555;">C</div>
<div class="r" style="left:448px;top:189px;width:1px;height:15px;background:#d4d4d4"></div>
<div class="t" style="left:401.00px;top:191.70px;font-size:11px;line-height:11px;color:#555;">D</div>
<div class="r" style="left:527px;top:189px;width:1px;height:15px;background:#d4d4d4"></div>
<div class="t" style="left:483.81px;top:191.70px;font-size:11px;line-height:11px;color:#555;">E</div>
<div class="r" style="left:603px;top:189px;width:1px;height:15px;background:#d4d4d4"></div>
<div class="t" style="left:561.62px;top:191.70px;font-size:11px;line-height:11px;color:#555;">F</div>
<div class="r" style="left:650px;top:189px;width:1px;height:15px;background:#d4d4d4"></div>
<div class="t" style="left:622.25px;top:191.70px;font-size:11px;line-height:11px;color:#555;">G</div>
<div class="r" style="left:706px;top:189px;width:1px;height:15px;background:#d4d4d4"></div>
<div class="t" style="left:674.00px;top:191.70px;font-size:11px;line-height:11px;color:#555;">H</div>
<div class="r" style="left:796px;top:189px;width:1px;height:15px;background:#ababab"></div>
<div class="t" style="left:749.50px;top:191.70px;font-size:11px;line-height:11px;color:#217346;font-weight:bold;">I</div>
<div class="r" style="left:821px;top:189px;width:1px;height:15px;background:#ababab"></div>
<div class="t" style="left:805.44px;top:191.70px;font-size:11px;line-height:11px;color:#217346;font-weight:bold;">J</div>
<div class="r" style="left:915px;top:189px;width:1px;height:15px;background:#ababab"></div>
<div class="t" style="left:864.00px;top:191.70px;font-size:11px;line-height:11px;color:#217346;font-weight:bold;">K</div>
<div class="r" style="left:961px;top:189px;width:1px;height:15px;background:#ababab"></div>
<div class="t" style="left:934.62px;top:191.70px;font-size:11px;line-height:11px;color:#217346;font-weight:bold;">L</div>
<div class="r" style="left:1014px;top:189px;width:1px;height:15px;background:#ababab"></div>
<div class="t" style="left:982.94px;top:191.70px;font-size:11px;line-height:11px;color:#217346;font-weight:bold;">M</div>
<div class="r" style="left:1090px;top:189px;width:1px;height:15px;background:#ababab"></div>
<div class="t" style="left:1048.00px;top:191.70px;font-size:11px;line-height:11px;color:#217346;font-weight:bold;">N</div>
<div class="r" style="left:1199px;top:189px;width:1px;height:15px;background:#ababab"></div>
<div class="t" style="left:1140.25px;top:191.70px;font-size:11px;line-height:11px;color:#217346;font-weight:bold;">O</div>
<div class="t" style="left:1227.61px;top:191.70px;font-size:11px;line-height:11px;color:#217346;font-weight:bold;">P</div>
<div class="r" style="left:0px;top:204px;width:706px;height:1px;background:#ababab"></div>
<div class="r" style="left:706px;top:203px;width:552px;height:2px;background:#1e6440"></div>
<div class="r" style="left:706px;top:189px;width:1px;height:15px;background:#9a9a9a"></div>
<svg class="s" style="left:13px;top:191px;" width="10" height="10" viewBox="0 0 10 10"><path d="M9.5 0.5 L9.5 9.5 L0.5 9.5 Z" fill="#e2e2e2"/></svg>
<div class="r" style="left:25px;top:189px;width:1px;height:441px;background:#ababab"></div>
<div class="r" style="left:0px;top:204px;width:25px;height:426px;background:#fff"></div>
<div class="r" style="left:0px;top:260px;width:25px;height:1px;background:#dedede"></div>
<div class="t" style="left:9.49px;top:247.20px;font-size:12px;line-height:12px;color:#4a4a4a;">1</div>
<div class="r" style="left:0px;top:276px;width:25px;height:1px;background:#dedede"></div>
<div class="t" style="left:9.49px;top:263.20px;font-size:12px;line-height:12px;color:#4a4a4a;">2</div>
<div class="r" style="left:0px;top:292px;width:25px;height:1px;background:#dedede"></div>
<div class="t" style="left:9.49px;top:279.20px;font-size:12px;line-height:12px;color:#4a4a4a;">3</div>
<div class="r" style="left:0px;top:308px;width:25px;height:1px;background:#dedede"></div>
<div class="t" style="left:9.49px;top:295.20px;font-size:12px;line-height:12px;color:#4a4a4a;">4</div>
<div class="r" style="left:0px;top:324px;width:25px;height:1px;background:#dedede"></div>
<div class="t" style="left:9.49px;top:311.20px;font-size:12px;line-height:12px;color:#4a4a4a;">5</div>
<div class="r" style="left:0px;top:340px;width:25px;height:1px;background:#dedede"></div>
<div class="t" style="left:9.49px;top:327.20px;font-size:12px;line-height:12px;color:#4a4a4a;">6</div>
<div class="r" style="left:0px;top:356px;width:25px;height:1px;background:#dedede"></div>
<div class="t" style="left:9.49px;top:343.20px;font-size:12px;line-height:12px;color:#4a4a4a;">7</div>
<div class="r" style="left:0px;top:372px;width:25px;height:1px;background:#dedede"></div>
<div class="t" style="left:9.49px;top:359.20px;font-size:12px;line-height:12px;color:#4a4a4a;">8</div>
<div class="r" style="left:0px;top:388px;width:25px;height:1px;background:#dedede"></div>
<div class="t" style="left:9.49px;top:375.20px;font-size:12px;line-height:12px;color:#4a4a4a;">9</div>
<div class="r" style="left:0px;top:404px;width:25px;height:1px;background:#dedede"></div>
<div class="t" style="left:6.11px;top:391.20px;font-size:12px;line-height:12px;color:#4a4a4a;">10</div>
<div class="r" style="left:0px;top:452px;width:25px;height:1px;background:#dedede"></div>
<div class="t" style="left:6.55px;top:439.20px;font-size:12px;line-height:12px;color:#4a4a4a;">11</div>
<div class="r" style="left:0px;top:468px;width:25px;height:1px;background:#dedede"></div>
<div class="t" style="left:6.11px;top:455.20px;font-size:12px;line-height:12px;color:#4a4a4a;">12</div>
<div class="r" style="left:0px;top:484px;width:25px;height:1px;background:#dedede"></div>
<div class="t" style="left:6.11px;top:471.20px;font-size:12px;line-height:12px;color:#4a4a4a;">13</div>
<div class="r" style="left:0px;top:499px;width:25px;height:1px;background:#dedede"></div>
<div class="t" style="left:6.11px;top:486.20px;font-size:12px;line-height:12px;color:#4a4a4a;">14</div>
<div class="r" style="left:0px;top:526px;width:25px;height:1px;background:#dedede"></div>
<div class="t" style="left:6.11px;top:513.20px;font-size:12px;line-height:12px;color:#4a4a4a;">15</div>
<div class="r" style="left:0px;top:547px;width:25px;height:1px;background:#dedede"></div>
<div class="t" style="left:6.11px;top:534.20px;font-size:12px;line-height:12px;color:#4a4a4a;">16</div>
<div class="r" style="left:0px;top:564px;width:25px;height:1px;background:#dedede"></div>
<div class="t" style="left:6.11px;top:551.20px;font-size:12px;line-height:12px;color:#4a4a4a;">17</div>
<div class="r" style="left:0px;top:599px;width:25px;height:1px;background:#dedede"></div>
<div class="t" style="left:6.11px;top:586.20px;font-size:12px;line-height:12px;color:#4a4a4a;">18</div>
<div class="r" style="left:0px;top:626px;width:25px;height:1px;background:#dedede"></div>
<div class="t" style="left:6.11px;top:613.20px;font-size:12px;line-height:12px;color:#4a4a4a;">19</div>
<div class="t" style="left:6.11px;top:647.20px;font-size:12px;line-height:12px;color:#4a4a4a;">20</div>
<div class="t" style="left:383.70px;top:219.70px;font-size:27px;line-height:27px;color:#0b2c8a;font-weight:bold;transform:scaleX(1.0127);transform-origin:0 0;">Title</div>
<div class="t" style="left:825.50px;top:225.20px;font-size:18px;line-height:18px;color:#000;font-weight:bold;">Overall Status</div>
<div class="t" style="left:1114.60px;top:225.20px;font-size:18px;line-height:18px;color:#000;font-weight:bold;transform:scaleX(0.9789);transform-origin:0 0;">IT Status</div>
<div class="r" style="left:979.5px;top:227px;width:18px;height:18px;background:#11a34f;border-radius:50%"></div>
<div class="r" style="left:1221px;top:227px;width:18px;height:18px;background:#11a34f;border-radius:50%"></div>
<div class="r" style="left:25px;top:260px;width:424px;height:1px;background:#000"></div>
<div class="r" style="left:25px;top:276px;width:424px;height:1px;background:#000"></div>
<div class="r" style="left:25px;top:292px;width:424px;height:1px;background:#000"></div>
<div class="r" style="left:25px;top:308px;width:424px;height:1px;background:#000"></div>
<div class="r" style="left:25px;top:324px;width:424px;height:1px;background:#000"></div>
<div class="r" style="left:25px;top:340px;width:424px;height:1px;background:#000"></div>
<div class="r" style="left:25px;top:356px;width:424px;height:1px;background:#000"></div>
<div class="r" style="left:25px;top:372px;width:424px;height:1px;background:#000"></div>
<div class="r" style="left:25px;top:388px;width:424px;height:1px;background:#000"></div>
<div class="r" style="left:155px;top:260px;width:1px;height:144px;background:#000"></div>
<div class="r" style="left:448px;top:260px;width:1px;height:144px;background:#000"></div>
<div class="r" style="left:362px;top:388px;width:1px;height:16px;background:#000"></div>
<div class="r" style="left:448px;top:388px;width:203px;height:1px;background:#000"></div>
<div class="r" style="left:650px;top:388px;width:1px;height:16px;background:#000"></div>
<div class="r" style="left:25px;top:404px;width:681px;height:49px;background:#2f5597"></div>
<div class="r" style="left:25px;top:404px;width:626px;height:1px;background:#000"></div>
<div class="t" style="left:28.00px;top:262.70px;font-size:11px;line-height:11px;color:#111;font-weight:bold;transform:scaleX(0.9848);transform-origin:0 0;">IT PM:</div>
<div class="t" style="left:28.00px;top:278.70px;font-size:11px;line-height:11px;color:#111;font-weight:bold;transform:scaleX(1.0247);transform-origin:0 0;">Business Unit:</div>
<div class="t" style="left:28.00px;top:294.70px;font-size:11px;line-height:11px;color:#111;font-weight:bold;transform:scaleX(1.0289);transform-origin:0 0;">IT Service Line:</div>
<div class="t" style="left:28.00px;top:310.70px;font-size:11px;line-height:11px;color:#111;font-weight:bold;transform:scaleX(0.9835);transform-origin:0 0;">CRM Focal Point:</div>
<div class="t" style="left:28.00px;top:326.70px;font-size:11px;line-height:11px;color:#111;font-weight:bold;">Actual Start Date:</div>
<div class="t" style="left:28.00px;top:342.70px;font-size:11px;line-height:11px;color:#111;font-weight:bold;transform:scaleX(1.0135);transform-origin:0 0;">Overall Planned Finish:</div>
<div class="t" style="left:28.00px;top:358.70px;font-size:11px;line-height:11px;color:#111;font-weight:bold;transform:scaleX(1.0156);transform-origin:0 0;">Overall Baseline Finish:</div>
<div class="t" style="left:28.00px;top:374.70px;font-size:11px;line-height:11px;color:#111;font-weight:bold;transform:scaleX(1.0399);transform-origin:0 0;">Tracking Category:</div>
<div class="t" style="left:28.00px;top:390.70px;font-size:11px;line-height:11px;color:#111;font-weight:bold;transform:scaleX(1.0425);transform-origin:0 0;">Project Type:</div>
<div class="t" style="left:158.30px;top:391.20px;font-size:12px;line-height:12px;color:#111;transform:scaleX(1.0052);transform-origin:0 0;">Express</div>
<div class="t" style="left:365.20px;top:391.70px;font-size:11px;line-height:11px;color:#111;font-weight:bold;transform:scaleX(1.0343);transform-origin:0 0;">Program</div>
<div class="t" style="left:532.30px;top:279.95px;font-size:12.5px;line-height:12.5px;color:#111;transform:scaleX(0.9627);transform-origin:0 0;">IT Deliverable Status:</div>
<div class="t" style="left:557.20px;top:310.95px;font-size:12.5px;line-height:12.5px;color:#111;transform:scaleX(0.9721);transform-origin:0 0;">Financial Status:</div>
<div class="t" style="left:557.20px;top:342.95px;font-size:12.5px;line-height:12.5px;color:#111;transform:scaleX(0.9667);transform-origin:0 0;">Milestone Status</div>
<div class="r" style="left:673.9px;top:282px;width:10px;height:10px;background:#11a34f;border-radius:50%"></div>
<div class="r" style="left:673.9px;top:314px;width:10px;height:10px;background:#11a34f;border-radius:50%"></div>
<div class="r" style="left:673.9px;top:346px;width:10px;height:10px;background:#11a34f;border-radius:50%"></div>
<div class="t" style="left:501.30px;top:374.95px;font-size:12.5px;line-height:12.5px;color:#111;transform:scaleX(0.9744);transform-origin:0 0;">Integration Project</div>
<div class="r" style="left:650px;top:372px;width:56px;height:16px;border:2px solid #000;box-sizing:border-box"></div>
<div class="t" style="left:331.30px;top:421.20px;font-size:14px;line-height:14px;color:#eef2fa;transform:scaleX(1.0057);transform-origin:0 0;">Description</div>
<div class="t" style="left:28.10px;top:455.95px;font-size:12.5px;line-height:12.5px;color:#111;transform:scaleX(0.9734);transform-origin:0 0;">Enhancement of Moderinzing Medicine interface t</div>
<div class="r" style="left:25px;top:498px;width:681px;height:49px;background:#003399"></div>
<div class="r" style="left:65px;top:499px;width:2px;height:48px;background:#1f5d9a"></div>
<div class="r" style="left:361px;top:499px;width:2px;height:48px;background:#1f5d9a"></div>
<div class="r" style="left:447px;top:499px;width:2px;height:48px;background:#1f5d9a"></div>
<div class="r" style="left:526px;top:499px;width:2px;height:48px;background:#1f5d9a"></div>
<div class="r" style="left:602px;top:499px;width:2px;height:48px;background:#1f5d9a"></div>
<div class="r" style="left:649px;top:499px;width:2px;height:48px;background:#1f5d9a"></div>
<div class="t" style="left:32.00px;top:517.70px;font-size:9px;line-height:9px;color:#fff;font-weight:bold;transform:scaleX(0.9863);transform-origin:0 0;">Task #</div>
<div class="t" style="left:195.40px;top:517.70px;font-size:9px;line-height:9px;color:#fff;font-weight:bold;transform:scaleX(0.9012);transform-origin:0 0;">Milestone</div>
<div class="t" style="left:392.00px;top:517.70px;font-size:9px;line-height:9px;color:#fff;font-weight:bold;transform:scaleX(0.9500);transform-origin:0 0;">Owner</div>
<div class="t" style="left:471.50px;top:517.70px;font-size:9px;line-height:9px;color:#fff;font-weight:bold;transform:scaleX(0.8730);transform-origin:0 0;">Baseline</div>
<div class="t" style="left:535.30px;top:517.70px;font-size:9px;line-height:9px;color:#fff;font-weight:bold;transform:scaleX(0.9359);transform-origin:0 0;">Forecast / Plan</div>
<div class="t" style="left:609.00px;top:517.70px;font-size:9px;line-height:9px;color:#fff;font-weight:bold;transform:scaleX(0.9778);transform-origin:0 0;">% Comp</div>
<div class="t" style="left:665.50px;top:517.70px;font-size:9px;line-height:9px;color:#fff;font-weight:bold;transform:scaleX(0.9273);transform-origin:0 0;">Status</div>
<div class="r" style="left:67px;top:547px;width:295px;height:17px;background:#f2dcdb"></div>
<div class="r" style="left:363px;top:547px;width:343px;height:17px;background:#fce4d6"></div>
<div class="r" style="left:65px;top:547px;width:2px;height:83px;background:#1b4f7a"></div>
<div class="r" style="left:361px;top:547px;width:2px;height:83px;background:#1b4f7a"></div>
<div class="r" style="left:447px;top:547px;width:2px;height:83px;background:#1b4f7a"></div>
<div class="r" style="left:526px;top:547px;width:2px;height:83px;background:#1b4f7a"></div>
<div class="r" style="left:602px;top:547px;width:2px;height:83px;background:#1b4f7a"></div>
<div class="r" style="left:649px;top:547px;width:2px;height:83px;background:#1b4f7a"></div>
<div class="t" style="left:70.00px;top:551.70px;font-size:9px;line-height:9px;color:#111;font-weight:bold;transform:scaleX(0.8316);transform-origin:0 0;">Plan</div>
<div class="r" style="left:25px;top:563px;width:681px;height:2px;background:#1b4f7a"></div>
<div class="r" style="left:25px;top:598px;width:681px;height:2px;background:#1b4f7a"></div>
<div class="r" style="left:25px;top:625px;width:681px;height:2px;background:#1b4f7a"></div>
<div class="r" style="left:651px;top:565px;width:55px;height:33px;background:#0070c0"></div>
<div class="r" style="left:651px;top:600px;width:55px;height:25px;background:#0070c0"></div>
<div class="r" style="left:651px;top:627px;width:55px;height:3px;background:#00b050"></div>
<div class="t" style="left:44.00px;top:568.70px;font-size:9px;line-height:9px;color:#111;transform:scaleX(0.8000);transform-origin:0 0;">1</div>
<div class="t" style="left:44.00px;top:603.70px;font-size:9px;line-height:9px;color:#111;transform:scaleX(0.8000);transform-origin:0 0;">2</div>
<div class="t" style="left:69.50px;top:577.95px;font-size:9.5px;line-height:9.5px;color:#111;transform:scaleX(0.9347);transform-origin:0 0;">Scope enhancement request with vendor and client</div>
<div class="t" style="left:69.50px;top:608.95px;font-size:9.5px;line-height:9.5px;color:#111;transform:scaleX(0.9060);transform-origin:0 0;">Design and build</div>
<div class="t" style="left:619.00px;top:586.95px;font-size:9.5px;line-height:9.5px;color:#111;transform:scaleX(0.9323);transform-origin:0 0;">100</div>
<div class="t" style="left:619.00px;top:613.95px;font-size:9.5px;line-height:9.5px;color:#111;transform:scaleX(0.9323);transform-origin:0 0;">100</div>
<div class="t" style="left:676.20px;top:587.70px;font-size:9px;line-height:9px;color:#bfe8ff;font-weight:bold;transform:scaleX(0.6769);transform-origin:0 0;">C</div>
<div class="t" style="left:676.20px;top:614.70px;font-size:9px;line-height:9px;color:#bfe8ff;font-weight:bold;transform:scaleX(0.6769);transform-origin:0 0;">C</div>
<div class="r" style="left:706px;top:260px;width:308px;height:16px;background:#92d050"></div>
<div class="t" style="left:709.40px;top:262.95px;font-size:12.5px;line-height:12.5px;color:#111;transform:scaleX(0.9784);transform-origin:0 0;">Project Completion %: 100</div>
<div class="r" style="left:706px;top:276px;width:493px;height:32px;background:#acd0e3"></div>
<div class="r" style="left:705px;top:275px;width:495px;height:2px;background:#1b4f7a"></div>
<div class="r" style="left:705px;top:307px;width:495px;height:2px;background:#1b4f7a"></div>
<div class="r" style="left:705px;top:339px;width:495px;height:2px;background:#1b4f7a"></div>
<div class="r" style="left:705px;top:275px;width:2px;height:66px;background:#1b4f7a"></div>
<div class="r" style="left:820px;top:275px;width:2px;height:66px;background:#1b4f7a"></div>
<div class="r" style="left:914px;top:275px;width:2px;height:66px;background:#1b4f7a"></div>
<div class="r" style="left:1013px;top:275px;width:2px;height:66px;background:#1b4f7a"></div>
<div class="r" style="left:1089px;top:275px;width:2px;height:66px;background:#1b4f7a"></div>
<div class="r" style="left:1198px;top:275px;width:2px;height:66px;background:#1b4f7a"></div>
<div class="t" style="left:722.30px;top:287.95px;font-size:9.5px;line-height:9.5px;color:#1a1a1a;font-weight:bold;">Approved  Budget</div>
<div class="t" style="left:851.00px;top:287.95px;font-size:9.5px;line-height:9.5px;color:#1a1a1a;font-weight:bold;">Spent $</div>
<div class="t" style="left:941.30px;top:287.95px;font-size:9.5px;line-height:9.5px;color:#1a1a1a;font-weight:bold;transform:scaleX(0.9747);transform-origin:0 0;">Forecast $</div>
<div class="t" style="left:1028.00px;top:287.95px;font-size:9.5px;line-height:9.5px;color:#1a1a1a;font-weight:bold;transform:scaleX(1.0255);transform-origin:0 0;">Variance $</div>
<div class="t" style="left:1115.40px;top:287.95px;font-size:9.5px;line-height:9.5px;color:#1a1a1a;font-weight:bold;transform:scaleX(0.9812);transform-origin:0 0;">Budget Req #</div>
<div class="t" style="left:709.40px;top:311.95px;font-size:9.5px;line-height:9.5px;color:#111;transform:scaleX(1.1200);transform-origin:0 0;">$0.00</div>
<div class="t" style="left:824.00px;top:312.70px;font-size:9px;line-height:9px;color:#111;transform:scaleX(1.0311);transform-origin:0 0;">$0.00</div>
<div class="t" style="left:918.30px;top:312.70px;font-size:9px;line-height:9px;color:#111;transform:scaleX(1.0311);transform-origin:0 0;">$0.00</div>
<div class="t" style="left:1017.00px;top:312.70px;font-size:9px;line-height:9px;color:#111;transform:scaleX(1.0178);transform-origin:0 0;">$0.00</div>
<div class="t" style="left:1092.70px;top:312.70px;font-size:9px;line-height:9px;color:#111;transform:scaleX(0.9871);transform-origin:0 0;">&lt;#&gt;</div>
<div class="r" style="left:915px;top:357px;width:99px;height:31px;background:#00b050"></div>
<div class="r" style="left:1199px;top:357px;width:59px;height:31px;background:#00b050"></div>
<div class="r" style="left:706px;top:355px;width:552px;height:2px;background:#1b4f7a"></div>
<div class="r" style="left:706px;top:387px;width:552px;height:2px;background:#1b4f7a"></div>
<div class="r" style="left:705px;top:355px;width:2px;height:34px;background:#1b4f7a"></div>
<div class="r" style="left:914px;top:355px;width:2px;height:34px;background:#1b4f7a"></div>
<div class="r" style="left:1013px;top:355px;width:2px;height:34px;background:#1b4f7a"></div>
<div class="r" style="left:1198px;top:355px;width:2px;height:34px;background:#1b4f7a"></div>
<div class="t" style="left:710.60px;top:359.70px;font-size:9px;line-height:9px;color:#1a1a1a;font-weight:bold;transform:scaleX(1.0496);transform-origin:0 0;">Staffing Plan / Named Resource Complete</div>
<div class="t" style="left:1017.60px;top:359.70px;font-size:9px;line-height:9px;color:#1a1a1a;font-weight:bold;transform:scaleX(1.0512);transform-origin:0 0;">Project Time Tracking Compliance</div>
<div class="t" style="left:1017.60px;top:372.70px;font-size:9px;line-height:9px;color:#1a1a1a;font-weight:bold;transform:scaleX(0.9690);transform-origin:0 0;">(100%)</div>
<div class="t" style="left:919.00px;top:359.95px;font-size:9.5px;line-height:9.5px;color:#1a3a2a;font-weight:bold;transform:scaleX(0.8000);transform-origin:0 0;">%</div>
<div class="t" style="left:1202.00px;top:359.95px;font-size:9.5px;line-height:9.5px;color:#1a3a2a;font-weight:bold;transform:scaleX(0.8000);transform-origin:0 0;">%</div>
<div class="r" style="left:706px;top:404px;width:552px;height:48px;background:#003399"></div>
<div class="r" style="left:705px;top:403px;width:553px;height:2px;background:#000"></div>
<div class="r" style="left:705px;top:451px;width:553px;height:2px;background:#000"></div>
<div class="r" style="left:705px;top:468px;width:553px;height:1px;background:#000"></div>
<div class="r" style="left:705px;top:484px;width:553px;height:1px;background:#000"></div>
<div class="r" style="left:705px;top:498px;width:553px;height:1px;background:#000"></div>
<div class="r" style="left:705px;top:403px;width:2px;height:96px;background:#000"></div>
<div class="r" style="left:796px;top:452px;width:1px;height:47px;background:#000"></div>
<div class="r" style="left:821px;top:452px;width:1px;height:47px;background:#000"></div>
<div class="r" style="left:1090px;top:452px;width:1px;height:47px;background:#000"></div>
<div class="r" style="left:1199px;top:452px;width:1px;height:47px;background:#000"></div>
<div class="r" style="left:795px;top:403px;width:2px;height:49px;background:#000"></div>
<div class="r" style="left:820px;top:403px;width:2px;height:49px;background:#000"></div>
<div class="r" style="left:1089px;top:403px;width:2px;height:49px;background:#000"></div>
<div class="r" style="left:1198px;top:403px;width:2px;height:49px;background:#000"></div>
<div class="t" style="left:713.60px;top:418.95px;font-size:8.5px;line-height:8.5px;color:#fff;font-weight:bold;transform:scaleX(0.9817);transform-origin:0 0;">Milestone Name / #</div>
<div class="t" style="left:734.50px;top:432.95px;font-size:8.5px;line-height:8.5px;color:#fff;font-weight:bold;transform:scaleX(0.9097);transform-origin:0 0;">Impacted</div>
<div class="t" style="left:804.50px;top:425.70px;font-size:8px;line-height:8px;color:#dde4f5;transform:scaleX(0.9561);transform-origin:0 0;">R/I</div>
<div class="t" style="left:911.30px;top:424.95px;font-size:8.5px;line-height:8.5px;color:#fff;font-weight:bold;transform:scaleX(0.9252);transform-origin:0 0;">Issue / Risk Description</div>
<div class="t" style="left:1132.00px;top:440.95px;font-size:8.5px;line-height:8.5px;color:#fff;font-weight:bold;transform:scaleX(0.9811);transform-origin:0 0;">Owner</div>
<div class="t" style="left:1212.40px;top:440.95px;font-size:8.5px;line-height:8.5px;color:#fff;font-weight:bold;transform:scaleX(0.9546);transform-origin:0 0;">Due Date</div>
<div class="r" style="left:706px;top:499px;width:552px;height:28px;background:#003399"></div>
<div class="t" style="left:709.40px;top:507.70px;font-size:11px;line-height:11px;color:#fff;font-weight:bold;transform:scaleX(0.8631);transform-origin:0 0;">Key Decisions Needed / Assumptions</div>
<div class="t" style="left:1133.80px;top:507.70px;font-size:11px;line-height:11px;color:#fff;font-weight:bold;transform:scaleX(0.8759);transform-origin:0 0;">Owner</div>
<div class="t" style="left:1202.50px;top:507.70px;font-size:11px;line-height:11px;color:#fff;font-weight:bold;transform:scaleX(0.8882);transform-origin:0 0;">Due Date</div>
<div class="r" style="left:1089px;top:499px;width:2px;height:131px;background:#1b4f7a"></div>
<div class="r" style="left:1198px;top:499px;width:2px;height:131px;background:#1b4f7a"></div>
<div class="r" style="left:705px;top:527px;width:2px;height:103px;background:#1b4f7a"></div>
<div class="r" style="left:706px;top:563px;width:552px;height:2px;background:#1b4f7a"></div>
<div class="r" style="left:706px;top:626px;width:552px;height:4px;background:#003399"></div>
<div class="r" style="left:796px;top:626px;width:2px;height:4px;background:#000"></div>
<div class="r" style="left:821px;top:626px;width:2px;height:4px;background:#000"></div>
<div class="r" style="left:1090px;top:626px;width:2px;height:4px;background:#000"></div>
<div class="r" style="left:1199px;top:626px;width:2px;height:4px;background:#000"></div>
<div class="r" style="left:1258px;top:189px;width:22px;height:441px;background:#fff"></div>
<div class="r" style="left:1262px;top:191px;width:15px;height:439px;background:#efefef"></div>
<div class="r" style="left:1258px;top:204px;width:1px;height:426px;background:#c6c6c6"></div>
<div class="r" style="left:1262px;top:191px;width:15px;height:15px;background:#fff;border:1px solid #ababab;box-sizing:border-box"></div>
<svg class="s" style="left:1264px;top:195px;" width="11" height="7" viewBox="0 0 11 7"><path d="M1 6 L5.5 1 L10 6 Z" fill="#666"/></svg>
<div class="r" style="left:1262px;top:206px;width:15px;height:194px;background:#fff;border:1px solid #ababab;box-sizing:border-box"></div>
<div class="r" style="left:1262px;top:616px;width:15px;height:15px;background:#fff;border:1px solid #ababab;box-sizing:border-box"></div>
<svg class="s" style="left:1264px;top:620px;" width="11" height="7" viewBox="0 0 11 7"><path d="M1 1 L5.5 6 L10 1 Z" fill="#666"/></svg>
<div class="r" style="left:0px;top:630px;width:1280px;height:28px;background:#f3f3f3"></div>
<div class="r" style="left:0px;top:630px;width:1258px;height:1px;background:#d4d4d4"></div>
<svg class="s" style="left:25px;top:638px;" width="8" height="12" viewBox="0 0 8 12"><path d="M7 1 L2 6 L7 11 Z" fill="#444"/></svg>
<svg class="s" style="left:54px;top:638px;" width="8" height="12" viewBox="0 0 8 12"><path d="M1 1 L6 6 L1 11 Z" fill="#bdbdbd"/></svg>
<div class="r" style="left:81px;top:647px;width:2.2px;height:2.2px;background:#333"></div>
<div class="r" style="left:85.5px;top:647px;width:2.2px;height:2.2px;background:#333"></div>
<div class="r" style="left:90px;top:647px;width:2.2px;height:2.2px;background:#333"></div>
<div class="r" style="left:100px;top:630px;width:65px;height:25px;background:#fff;border-left:1px solid #c6c6c6;border-right:1px solid #c6c6c6;box-sizing:border-box"></div>
<div class="r" style="left:100px;top:653px;width:65px;height:2px;background:#217346"></div>
<div class="t" style="left:112.50px;top:637.20px;font-size:13px;line-height:13px;color:#217346;font-weight:bold;transform:scaleX(0.9150);transform-origin:0 0;">Sheet1</div>
<svg class="s" style="left:198px;top:636px;" width="17" height="17" viewBox="0 0 17 17"><circle cx="8.5" cy="8.5" r="7" fill="none" stroke="#777" stroke-width="1.3"/><path d="M8.5 4.5 V12.5 M4.5 8.5 H12.5" stroke="#777" stroke-width="1.8"/></svg>
<div class="r" style="left:768px;top:640px;width:2px;height:2px;background:#999"></div>
<div class="r" style="left:768px;top:644px;width:2px;height:2px;background:#999"></div>
<div class="r" style="left:768px;top:648px;width:2px;height:2px;background:#999"></div>
<div class="r" style="left:800px;top:637px;width:459px;height:15px;background:#e8e8e8"></div>
<div class="r" style="left:785px;top:637px;width:16px;height:15px;background:#fff;border:1px solid #ababab;box-sizing:border-box"></div>
<svg class="s" style="left:789px;top:640px;" width="8" height="9" viewBox="0 0 8 9"><path d="M6 1 L1.5 4.5 L6 8 Z" fill="#666"/></svg>
<div class="r" style="left:800px;top:637px;width:399px;height:15px;background:#fff;border:1px solid #ababab;box-sizing:border-box"></div>
<div class="r" style="left:1244px;top:637px;width:15px;height:15px;background:#fff;border:1px solid #ababab;box-sizing:border-box"></div>
<svg class="s" style="left:1248px;top:640px;" width="8" height="9" viewBox="0 0 8 9"><path d="M2 1 L6.5 4.5 L2 8 Z" fill="#666"/></svg>
<div class="r" style="left:0px;top:658px;width:1280px;height:22px;background:#217346"></div>
<div class="r" style="left:0px;top:680px;width:1280px;height:2px;background:#222"></div>
<div class="t" style="left:8.00px;top:663.70px;font-size:11px;line-height:11px;color:#e8f5ec;transform:scaleX(0.8449);transform-origin:0 0;">READY</div>
<div class="r" style="left:991px;top:658px;width:38px;height:22px;background:#1b5e39"></div>
<svg class="s" style="left:1001px;top:661px;" width="17" height="16" viewBox="0 0 17 16"><path d="M1.5 1.5 H14.5 V14.5 H1.5 Z M5.8 1.5 V14.5 M10.2 1.5 V14.5 M1.5 5.8 H14.5 M1.5 10.2 H14.5" fill="none" stroke="#e8f5ec" stroke-width="1.2"/></svg>
<svg class="s" style="left:1040px;top:661px;" width="17" height="16" viewBox="0 0 17 16"><rect x="1.5" y="1.5" width="14" height="13" fill="none" stroke="#e8f5ec" stroke-width="1.3"/><rect x="4.5" y="4.5" width="8" height="7" fill="none" stroke="#e8f5ec" stroke-width="1"/><path d="M6 6.5 H11 M6 8.5 H11" stroke="#e8f5ec" stroke-width="1"/></svg>
<svg class="s" style="left:1078px;top:661px;" width="17" height="16" viewBox="0 0 17 16"><rect x="1.5" y="1.5" width="14" height="13" fill="none" stroke="#e8f5ec" stroke-width="1.3"/><rect x="3" y="2" width="4" height="6" fill="#e8f5ec"/><rect x="8" y="2" width="3" height="3" fill="#e8f5ec"/></svg>
<div class="r" style="left:1110px;top:668px;width:6px;height:2px;background:#e8f5ec"></div>
<div class="r" style="left:1120px;top:668px;width:100px;height:1px;background:#e8f5ec"></div>
<div class="r" style="left:1160px;top:663px;width:5px;height:11px;background:#e8f5ec"></div>
<div class="r" style="left:1170px;top:665px;width:1px;height:7px;background:#e8f5ec"></div>
<div class="r" style="left:1224px;top:668px;width:9px;height:2px;background:#e8f5ec"></div>
<div class="r" style="left:1227.5px;top:664.5px;width:2px;height:9px;background:#e8f5ec"></div>
<div class="t" style="left:1248.00px;top:663.20px;font-size:12px;line-height:12px;color:#e8f5ec;transform:scaleX(0.8767);transform-origin:0 0;">85 %</div>
<div class="t" style="left:991.20px;top:606.20px;font-size:19px;line-height:19px;color:rgba(130,130,130,0.45);transform:scaleX(1.0447);transform-origin:0 0;">Activate Windows</div>
<div class="t" style="left:991.20px;top:631.20px;font-size:14px;line-height:14px;color:rgba(130,130,130,0.45);transform:scaleX(1.0670);transform-origin:0 0;">Go to Settings to activate Windows.</div>
</body></html>
